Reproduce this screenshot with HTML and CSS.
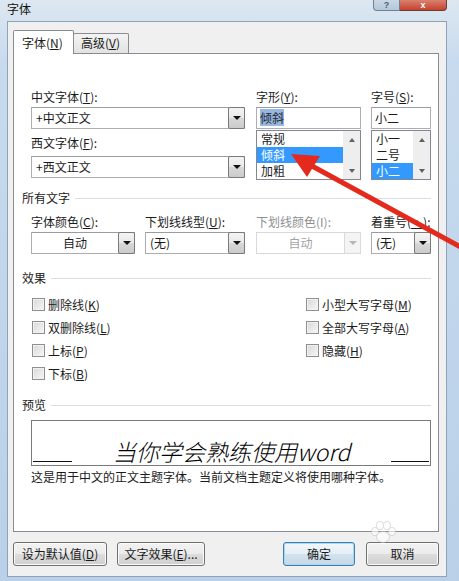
FILE: index.html
```html
<!DOCTYPE html>
<html lang="zh-CN">
<head>
	<meta charset="UTF-8">
	<title>字体</title>
	<link rel="stylesheet" href="styles.css">
</head>
<body>
	<div class="window">
		<div class="titlebar">
			<span class="title">字体</span>
			<div class="caption">
				<span class="cap-help">?</span>
				<span class="cap-close">x</span>
			</div>
		</div>

		<div class="client">
			<div class="tabs">
				<span class="tab tab-active">字体(<u>N</u>)</span>
				<span class="tab tab-adv">高级(<u>V</u>)</span>
			</div>

			<div class="panel">
				<div class="fonts">
					<div class="col-font">
						<div class="label">中文字体(<u>T</u>):</div>
						<div class="combo"><span class="value">+中文正文</span><span class="drop"></span></div>
						<div class="label label-second">西文字体(<u>F</u>):</div>
						<div class="combo combo-second"><span class="value">+西文正文</span><span class="drop"></span></div>
					</div>
					<div class="col-style">
						<div class="label">字形(<u>Y</u>):</div>
						<div class="edit"><span class="sel-text">倾斜</span></div>
						<div class="list">
							<ul class="items">
								<li>常规</li>
								<li class="selected">倾斜</li>
								<li>加粗</li>
							</ul>
							<div class="sb"><span class="sb-up"></span><span class="sb-down"></span></div>
						</div>
					</div>
					<div class="col-size">
						<div class="label">字号(<u>S</u>):</div>
						<div class="edit">小二</div>
						<div class="list">
							<ul class="items">
								<li>小一</li>
								<li>二号</li>
								<li class="selected">小二</li>
							</ul>
							<div class="sb"><span class="sb-up"></span><span class="sb-down"></span></div>
						</div>
					</div>
				</div>

				<div class="group group-all">所有文字</div>
				<div class="fields">
					<div class="field f-color">
						<div class="label">字体颜色(<u>C</u>):</div>
						<div class="combo"><span class="value centered">自动</span><span class="drop"></span></div>
					</div>
					<div class="field f-uline">
						<div class="label">下划线线型(<u>U</u>):</div>
						<div class="combo"><span class="value">(无)</span><span class="drop"></span></div>
					</div>
					<div class="field f-ucolor">
						<div class="label disabled">下划线颜色(I):</div>
						<div class="combo combo-disabled"><span class="value centered">自动</span><span class="drop"></span></div>
					</div>
					<div class="field f-emph">
						<div class="label">着重号(<u>·</u>):</div>
						<div class="combo"><span class="value">(无)</span><span class="drop"></span></div>
					</div>
				</div>

				<div class="group group-effects">效果</div>
				<div class="checks">
					<div class="check"><span class="box"></span>删除线(<u>K</u>)</div>
					<div class="check"><span class="box"></span>双删除线(<u>L</u>)</div>
					<div class="check"><span class="box"></span>上标(<u>P</u>)</div>
					<div class="check"><span class="box"></span>下标(<u>B</u>)</div>
					<div class="check"><span class="box"></span>小型大写字母(<u>M</u>)</div>
					<div class="check"><span class="box"></span>全部大写字母(<u>A</u>)</div>
					<div class="check"><span class="box"></span>隐藏(<u>H</u>)</div>
				</div>

				<div class="group group-preview">预览</div>
				<div class="preview">
					<span class="rule"></span>
					<span class="sample">当你学会熟练使用word</span>
					<span class="rule rule-right"></span>
				</div>
				<p class="note">这是用于中文的正文主题字体。当前文档主题定义将使用哪种字体。</p>
			</div>

			<div class="actions">
				<button class="btn btn-setdefault">设为默认值(<u>D</u>)</button>
				<button class="btn btn-effects">文字效果(<u>E</u>)...</button>
				<button class="btn btn-ok">确定</button>
				<button class="btn btn-cancel">取消</button>
			</div>
		</div>

		<!-- red annotation arrow pasted over the dialog -->
		<svg class="arrow" width="459" height="581" viewBox="0 0 459 581">
			<line x1="312" y1="166" x2="466" y2="250" stroke="#e42a1d" stroke-width="5" />
			<polygon points="291,154 320,156 307,177" fill="#e42a1d" />
		</svg>

		<!-- faint site watermark -->
		<div class="watermark">
			<span class="wm-paw">
				<i></i><i></i><i></i><i></i><i class="pad"></i>
			</span>
		</div>
	</div>
</body>
</html>
```

FILE: styles.css
```css
* {
	box-sizing: border-box;
}

body {
	margin: 0;
	font-family: "Noto Sans CJK SC", "Noto Sans", sans-serif;
	font-size: 12px;
	color: #1b1b1b;
}

u {
	text-underline-offset: 1px;
}

.window {
	position: relative;
	width: 459px;
	height: 581px;
	overflow: hidden;
	display: flex;
	flex-direction: column;
	background: linear-gradient(#dde7f1, #c8dbee 60px, #b9d0e8);
}

/* title bar */
.titlebar {
	height: 21px;
	display: flex;
	align-items: flex-start;
	padding-left: 7px;
	flex: none;
}

.title {
	line-height: 17px;
	color: #111;
}

.caption {
	margin-left: auto;
	margin-right: 12px;
	display: flex;
	height: 11px;
}

.cap-help,
.cap-close {
	height: 11px;
	display: flex;
	justify-content: center;
	align-items: center;
	font-family: "Liberation Sans", sans-serif;
	font-weight: bold;
	font-size: 9px;
	line-height: 10px;
}

.cap-help {
	width: 27px;
	border: 1px solid #6f8093;
	border-top: none;
	border-radius: 0 0 0 4px;
	background: linear-gradient(#c9d7e6, #b5c7da);
	color: #50606f;
}

.cap-close {
	width: 47px;
	border: 1px solid #6e3b35;
	border-top: none;
	border-left: none;
	border-radius: 0 0 4px 0;
	background: linear-gradient(#d9826f, #c5422f);
	color: #fff;
}

/* dialog client area */
.client {
	flex: none;
	height: 556px;
	margin: 0 12px 0 7px;
	border: 1px solid #8ea2b8;
	background: #f0f0f0;
	padding: 8px 7px 0 5px;
}

.tabs {
	display: flex;
	align-items: flex-end;
	height: 23px;
}

.tab {
	height: 20px;
	width: 56px;
	padding: 1px 0 0 7px;
	line-height: 16px;
	border: 1px solid #898c95;
	border-bottom: none;
	background: linear-gradient(#f4f4f4, #e2e2e2);
	white-space: nowrap;
}

.tab-active {
	position: relative;
	z-index: 1;
	height: 24px;
	width: 61px;
	margin-bottom: -1px;
	padding: 4px 0 0 8px;
	background: #fff;
	border-radius: 2px 2px 0 0;
}

.tab-adv {
	margin-left: -1px;
	border-radius: 2px 2px 0 0;
}

.panel {
	height: 479px;
	border: 1px solid #898c95;
	background: #fff;
	padding: 35px 7px 0 8px;
}

.label {
	line-height: 16px;
	white-space: nowrap;
}

.disabled {
	color: #8f8f8f;
}

/* font / style / size */
.fonts {
	display: flex;
	margin-left: 9px;
}

.col-font {
	width: 214px;
	margin-right: 11px;
}

.col-style {
	width: 105px;
	margin-right: 10px;
}

.col-size {
	width: 60px;
}

.combo {
	display: flex;
	height: 22px;
	margin-top: 2px;
	border: 1px solid #abadb3;
	border-top-color: #9a9ca2;
	background: #fff;
}

.label-second {
	margin-top: 6px;
}

.combo-second {
	margin-top: 5px;
}

.value {
	flex: 1;
	padding-left: 4px;
	line-height: 20px;
	white-space: nowrap;
}

.centered {
	text-align: center;
	padding-left: 0;
}

.drop {
	width: 17px;
	margin: -1px -1px -1px 0;
	border: 1px solid #7a7a7a;
	border-radius: 2px;
	background: linear-gradient(#f4f4f4, #e8e8e8 50%, #d8d8d8 51%, #cbcbcb);
	display: flex;
	align-items: center;
	justify-content: center;
}

.drop::after {
	content: "";
	border-left: 4px solid transparent;
	border-right: 4px solid transparent;
	border-top: 4px solid #111;
}

.combo-disabled {
	border-color: #d9d9d9;
	color: #a3a3a3;
}

.combo-disabled .drop {
	border-color: #d9d9d9;
	background: #f4f4f4;
}

.combo-disabled .drop::after {
	border-top-color: #b5b5b5;
}

.edit {
	height: 22px;
	margin-top: 2px;
	border: 1px solid #abadb3;
	border-top-color: #9a9ca2;
	padding-left: 3px;
	line-height: 20px;
}

.sel-text {
	background: #96b7df;
	color: #1d2530;
}

.list {
	display: flex;
	height: 50px;
	margin-top: 1px;
	border: 1px solid #828790;
}

.items {
	flex: 1;
	list-style: none;
	margin: 0;
	padding: 0;
}

.items li {
	height: 16px;
	line-height: 16px;
	padding-left: 4px;
}

.items li.selected {
	background: #3399ff;
	color: #fff;
}

.sb {
	width: 17px;
	background: #eeeeee;
	display: flex;
	flex-direction: column;
	justify-content: space-between;
}

.sb span {
	height: 17px;
	display: flex;
	align-items: center;
	justify-content: center;
}

.sb-up::after {
	content: "";
	border-left: 3px solid transparent;
	border-right: 3px solid transparent;
	border-bottom: 4px solid #606060;
}

.sb-down::after {
	content: "";
	border-left: 3px solid transparent;
	border-right: 3px solid transparent;
	border-top: 4px solid #606060;
}

/* group headings */
.group {
	display: flex;
	align-items: center;
	line-height: 16px;
}

.group::after {
	content: "";
	flex: 1;
	margin: 1px 0 0 5px;
	border-top: 1px solid #d5dfe5;
}

.group-all {
	margin-top: 10px;
}

.group-effects {
	margin-top: 16px;
}

.group-preview {
	margin-top: 12px;
}

/* colour / underline row */
.fields {
	display: flex;
	margin: 8px 0 0 9px;
}

.f-color {
	width: 104px;
	margin-right: 10px;
}

.f-uline {
	width: 100px;
	margin-right: 11px;
}

.f-ucolor {
	width: 105px;
	margin-right: 10px;
}

.f-emph {
	width: 60px;
}

/* effects */
.checks {
	display: grid;
	grid-template-columns: 274px 1fr;
	grid-template-rows: repeat(4, 23px);
	grid-auto-flow: column;
	margin: 7px 0 0 10px;
}

.check {
	display: flex;
	align-items: center;
	white-space: nowrap;
}

.box {
	width: 13px;
	height: 13px;
	margin-right: 3px;
	border: 1px solid #8f8f8f;
	background: linear-gradient(135deg, #d8d8d8, #f7f7f7);
	box-shadow: inset 0 0 0 1px #f2f2f2;
}

/* preview */
.preview {
	display: flex;
	align-items: flex-end;
	height: 46px;
	margin: 7px 0 0 9px;
	padding: 0 1px 3px;
	border: 1px solid #7b7b7b;
}

.rule {
	width: 39px;
	border-bottom: 1px solid #111;
}

.rule-right {
	width: 38px;
}

.sample {
	flex: 1;
	text-align: center;
	font-size: 23px;
	font-weight: 300;
	font-style: italic;
	line-height: 28px;
	margin-bottom: -3px;
	color: #000;
}

.note {
	margin: 3px 0 0 9px;
	line-height: 16px;
	white-space: nowrap;
}

/* bottom buttons */
.actions {
	display: flex;
	margin-top: 10px;
	height: 24px;
}

.btn {
	height: 24px;
	padding: 0;
	border: 1px solid #707070;
	border-radius: 3px;
	background: linear-gradient(#f2f2f2, #ebebeb 50%, #dddddd 51%, #cfcfcf);
	box-shadow: inset 0 0 0 1px #fbfbfb;
	font: inherit;
	color: #1b1b1b;
	line-height: 20px;
}

.btn-setdefault {
	width: 94px;
}

.btn-effects {
	width: 88px;
	margin-left: 10px;
}

.btn-ok {
	width: 72px;
	margin-left: auto;
	border-color: #3c7fb1;
	background: linear-gradient(#f1f7fb, #e4eef6 50%, #d3e2ee 51%, #c6d8e6);
	box-shadow: inset 0 0 0 1px #a8d8f4;
}

.btn-cancel {
	width: 73px;
	margin-left: 11px;
}

/* overlays */
.arrow {
	position: absolute;
	left: 0;
	top: 0;
	pointer-events: none;
}

.watermark {
	position: absolute;
	left: 370px;
	top: 521px;
	width: 26px;
	height: 24px;
	pointer-events: none;
	opacity: 0.6;
}

.wm-paw {
	position: absolute;
	left: 0;
	top: 0;
	width: 26px;
	height: 24px;
}

.wm-paw i {
	position: absolute;
	width: 6px;
	height: 7px;
	border-radius: 50%;
	background: #fff;
	box-shadow: 0 0 0 1px #c9c9c9;
}

.wm-paw i:nth-child(1) { left: 2px; top: 7px; }
.wm-paw i:nth-child(2) { left: 7px; top: 1px; }
.wm-paw i:nth-child(3) { left: 14px; top: 1px; }
.wm-paw i:nth-child(4) { left: 19px; top: 7px; }

.wm-paw i.pad {
	left: 7px;
	top: 11px;
	width: 12px;
	height: 10px;
}
```
